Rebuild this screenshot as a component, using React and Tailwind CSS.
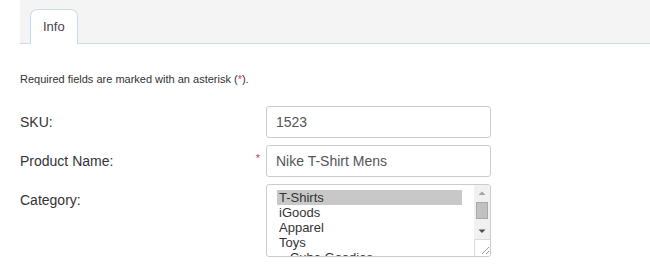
import React from 'react'

const categories = ['T-Shirts', 'iGoods', 'Apparel', 'Toys', '\u00a0\u00a0\u00a0Cube Goodies']

function FakeScrollbar() {
  return (
    <div className="flex w-[16px] flex-col bg-[#f1f1f1]">
      <div className="flex h-[16px] items-center justify-center">
        <svg width="16" height="16" viewBox="0 0 16 16">
          <polygon points="4.5,10 8,6.5 11.5,10" fill="#a3a3a3" />
        </svg>
      </div>
      <div className="flex flex-1 justify-center pt-px">
        <div className="h-[17px] w-[12px] border border-[#a9a9a9] bg-[#c1c1c1]" />
      </div>
      <div className="flex h-[17px] items-center justify-center">
        <svg width="16" height="16" viewBox="0 0 16 16">
          <polygon points="4.5,6.5 11.5,6.5 8,10" fill="#505050" />
        </svg>
      </div>
      <div className="h-[17px] border-l border-t border-[#dcdcdc] bg-white">
        <svg width="16" height="17" viewBox="0 0 16 17">
          <line x1="14" y1="7" x2="7" y2="14" stroke="#9a9a9a" strokeWidth="1" />
          <line x1="14" y1="11" x2="11" y2="14" stroke="#9a9a9a" strokeWidth="1" />
        </svg>
      </div>
    </div>
  )
}

function FormRow({ label, required, children }) {
  return (
    <div className="flex">
      <div className="flex h-[32px] w-[246px] items-center justify-between pr-[6px]">
        <span className="text-[14px] text-[#333]">{label}</span>
        {required && <span className="-mt-[6px] text-[11px] text-[#e8334a]">*</span>}
      </div>
      {children}
    </div>
  )
}

export default function App() {
  return (
    <div className="min-h-screen bg-white pl-[20px] font-['Liberation_Sans',Arial,sans-serif]">
      <div className="flex h-[44px] items-end border-b border-[#c8dbe8] bg-[#f4f4f4] pl-[10px]">
        <div className="-mb-px flex h-[35px] items-center rounded-t-[7px] border border-b-0 border-[#c8dbe8] bg-white px-[12px] text-[13px] text-[#444]">
          Info
        </div>
      </div>

      <p className="mt-[29px] text-[11px] leading-[13px] text-[#333]">
        Required fields are marked with an asterisk (<span className="text-[#e8334a]">*</span>).
      </p>

      <div className="mt-[20px] flex flex-col gap-[7px]">
        <FormRow label="SKU:">
          <div className="flex h-[32px] w-[225px] items-center rounded-[3px] border border-[#ccc] pl-[9px] text-[14px] text-[#555]">
            1523
          </div>
        </FormRow>
        <FormRow label="Product Name:" required>
          <div className="flex h-[32px] w-[225px] items-center rounded-[3px] border border-[#ccc] pl-[9px] text-[14px] text-[#555]">
            Nike T-Shirt Mens
          </div>
        </FormRow>
        <FormRow label="Category:">
          <div className="flex h-[73px] w-[225px] overflow-hidden rounded-[3px] border border-[#ccc]">
            <div className="flex-1 overflow-hidden pl-[10px] pr-[12px] pt-[5px]">
              {categories.map((c, i) => (
                <div
                  key={c}
                  className={
                    'h-[15px] whitespace-pre pl-[2px] text-[13px] leading-[15px] text-[#333] ' +
                    (i === 0 ? 'bg-[#c8c8c8]' : '')
                  }
                >
                  {c}
                </div>
              ))}
            </div>
            <FakeScrollbar />
          </div>
        </FormRow>
      </div>
    </div>
  )
}
